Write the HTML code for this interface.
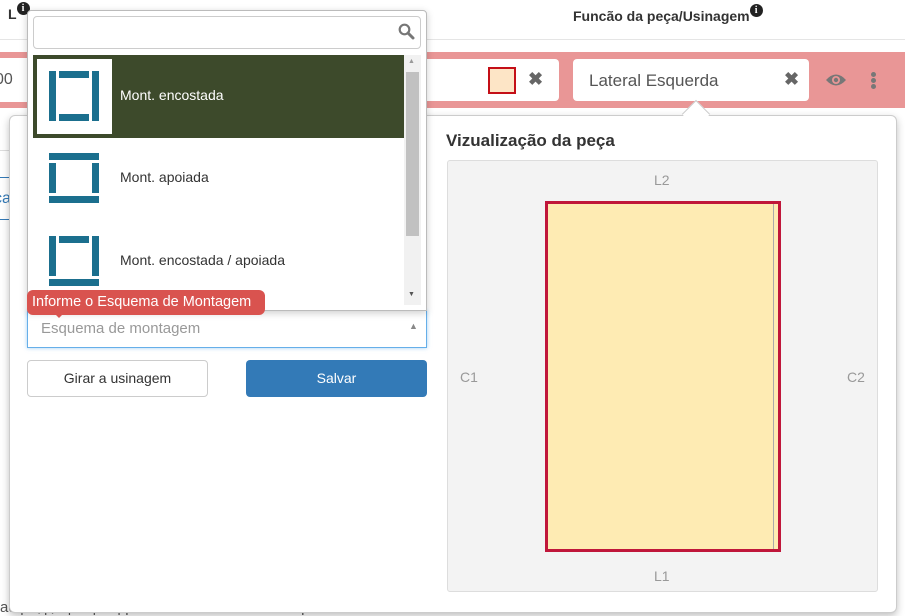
<!DOCTYPE html>
<html><head><meta charset="utf-8"><style>
*{box-sizing:border-box;margin:0;padding:0}
body{width:905px;height:616px;overflow:hidden;background:#fff;font-family:"Liberation Sans",sans-serif;font-size:14px;color:#333;position:relative}
.a{position:absolute}
.info{display:inline-block;width:13px;height:13px;border-radius:50%;background:#222;color:#fff;font-size:10px;font-weight:bold;text-align:center;line-height:13px;font-family:"Liberation Serif",serif;vertical-align:top}
.bar{position:absolute;background:#1b6f8e}
</style></head><body>
<!-- header -->
<div class="a" style="left:8px;top:6px;font-weight:bold;font-size:14px">L<span class="info" style="margin-top:-4px">i</span></div>
<div class="a" style="left:573px;top:8px;font-weight:bold;font-size:14px">Funcão da peça/Usinagem<span class="info" style="margin-top:-4px">i</span></div>
<div class="a" style="left:0;top:39px;width:905px;height:1px;background:#e5e5e5"></div>
<!-- red row -->
<div class="a" style="left:0;top:52px;width:905px;height:56px;background:#e99696"></div>
<div class="a" style="left:0;top:58px;width:28px;height:44px;background:#fff"></div>
<div class="a" style="left:-5px;top:71px;font-size:16px;color:#555">00</div>
<div class="a" style="left:400px;top:59px;width:159px;height:42px;background:#fff;border-radius:4px"></div>
<div class="a" style="left:488px;top:67px;width:28px;height:27px;background:#fde5c6;border:2px solid #c40f17"></div>
<div class="a" style="left:528px;top:69px;font-size:18px;color:#666;font-weight:bold">✖</div>
<div class="a" style="left:573px;top:59px;width:236px;height:42px;background:#fff;border-radius:4px"></div>
<div class="a" style="left:589px;top:71px;font-size:17px;color:#555">Lateral Esquerda</div>
<div class="a" style="left:784px;top:69px;font-size:18px;color:#666;font-weight:bold">✖</div>
<svg class="a" style="left:825px;top:72px" width="22" height="16" viewBox="0 0 22 16"><path d="M1 8 Q11 -3 21 8 Q11 19 1 8Z" fill="#777"/><circle cx="11" cy="8" r="4" fill="#e99696"/><circle cx="11" cy="8" r="2.2" fill="#777"/></svg>
<div class="a" style="left:871px;top:72px;width:5px;height:5px;border-radius:50%;background:#777;box-shadow:0 6px 0 #777,0 12px 0 #777"></div>
<!-- behind left -->
<div class="a" style="left:0;top:150px;width:9px;height:1px;background:#ddd"></div>
<div class="a" style="left:0;top:177px;width:9px;height:43px;border-top:1px solid #337ab7;border-bottom:1px solid #337ab7"></div>
<div class="a" style="left:-6px;top:190px;font-size:16px;color:#337ab7">ca</div>
<div class="a" style="left:0;top:598px;font-size:15px;color:#555;white-space:nowrap">ac | ◀ | ▶ | ⬆ | ⬇ | para alternar entre os campos da lista</div>
<!-- popover -->
<div class="a" style="left:9px;top:115px;width:888px;height:498px;background:#fff;border:1px solid #ccc;border-radius:6px;box-shadow:0 3px 8px rgba(0,0,0,.25)"></div>
<div class="a" style="left:686px;top:104px;width:20px;height:20px;background:#fff;border-left:1px solid #ccc;border-top:1px solid #ccc;transform:rotate(45deg)"></div>
<div class="a" style="left:446px;top:131px;font-size:17px;font-weight:bold;color:#333">Vizualização da peça</div>
<div class="a" style="left:447px;top:160px;width:431px;height:432px;background:#f3f3f3;border:1px solid #ddd;border-radius:3px"></div>
<div class="a" style="left:654px;top:172px;color:#999">L2</div>
<div class="a" style="left:654px;top:568px;color:#999">L1</div>
<div class="a" style="left:460px;top:369px;color:#999">C1</div>
<div class="a" style="left:847px;top:369px;color:#999">C2</div>
<div class="a" style="left:545px;top:201px;width:236px;height:351px;background:#feebb3;border:3px solid #c0163a"></div>
<div class="a" style="left:773px;top:204px;width:1px;height:345px;background:#aaa"></div>
<!-- select + tooltip -->
<div class="a" style="left:27px;top:310px;width:400px;height:38px;border:1px solid #66afe9;box-shadow:0 0 4px rgba(102,175,233,.6);background:#fff"></div>
<div class="a" style="left:41px;top:320px;font-size:15px;color:#999">Esquema de montagem</div>
<div class="a" style="left:409px;top:321px;font-size:9px;color:#888">▲</div>
<div class="a" style="left:27px;top:360px;width:181px;height:37px;border:1px solid #ccc;border-radius:4px;text-align:center;line-height:35px;font-size:14px">Girar a usinagem</div>
<div class="a" style="left:246px;top:360px;width:181px;height:37px;background:#337ab7;border-radius:4px;color:#fff;text-align:center;line-height:37px;font-size:14px">Salvar</div>
<!-- dropdown -->
<div class="a" style="left:27px;top:10px;width:400px;height:301px;background:#fff;border:1px solid #bbb;border-radius:4px 4px 0 0;box-shadow:0 2px 8px rgba(0,0,0,.2)"></div>
<div class="a" style="left:33px;top:16px;width:388px;height:33px;border:1px solid #ccc;border-radius:4px"></div>
<svg class="a" style="left:398px;top:23px" width="17" height="17" viewBox="0 0 17 17"><circle cx="6.5" cy="6.5" r="4.8" fill="none" stroke="#777" stroke-width="2.2"/><path d="M10 10 L15 15" stroke="#777" stroke-width="3" stroke-linecap="round"/></svg>
<div class="a" style="left:33px;top:55px;width:371px;height:83px;background:#3d4a2b"></div>
<div class="a" style="left:37px;top:59px;width:75px;height:75px;background:#fff"></div>
<div class="bar" style="left:49px;top:71px;width:7px;height:50px"></div>
<div class="bar" style="left:92px;top:71px;width:7px;height:50px"></div>
<div class="bar" style="left:59px;top:71px;width:30px;height:7px"></div>
<div class="bar" style="left:59px;top:114px;width:30px;height:7px"></div>
<div class="a" style="left:120px;top:87px;color:#fff">Mont. encostada</div>
<div class="bar" style="left:49px;top:153px;width:50px;height:7px"></div>
<div class="bar" style="left:49px;top:196px;width:50px;height:7px"></div>
<div class="bar" style="left:49px;top:163px;width:7px;height:30px"></div>
<div class="bar" style="left:92px;top:163px;width:7px;height:30px"></div>
<div class="a" style="left:120px;top:169px">Mont. apoiada</div>
<div class="bar" style="left:59px;top:236px;width:30px;height:7px"></div>
<div class="bar" style="left:49px;top:236px;width:7px;height:40px"></div>
<div class="bar" style="left:92px;top:236px;width:7px;height:40px"></div>
<div class="bar" style="left:49px;top:279px;width:50px;height:7px"></div>
<div class="a" style="left:120px;top:252px">Mont. encostada / apoiada</div>
<div class="a" style="left:404px;top:55px;width:17px;height:250px;background:#f1f1f1"></div>
<div class="a" style="left:406px;top:72px;width:13px;height:164px;background:#c1c1c1"></div>
<div class="a" style="left:408px;top:58px;font-size:7px;color:#999">▲</div>
<div class="a" style="left:408px;top:291px;font-size:7px;color:#555">▼</div>
<div class="a" style="left:27px;top:290px;width:238px;height:25px;background:#d9534f;border-radius:6px;color:#fff;font-size:14.5px;line-height:25px;padding-left:5px">Informe o Esquema de Montagem</div>
<div class="a" style="left:53px;top:312px;width:0;height:0;border-left:6px solid transparent;border-right:6px solid transparent;border-top:6px solid #d9534f"></div>
</body></html>
